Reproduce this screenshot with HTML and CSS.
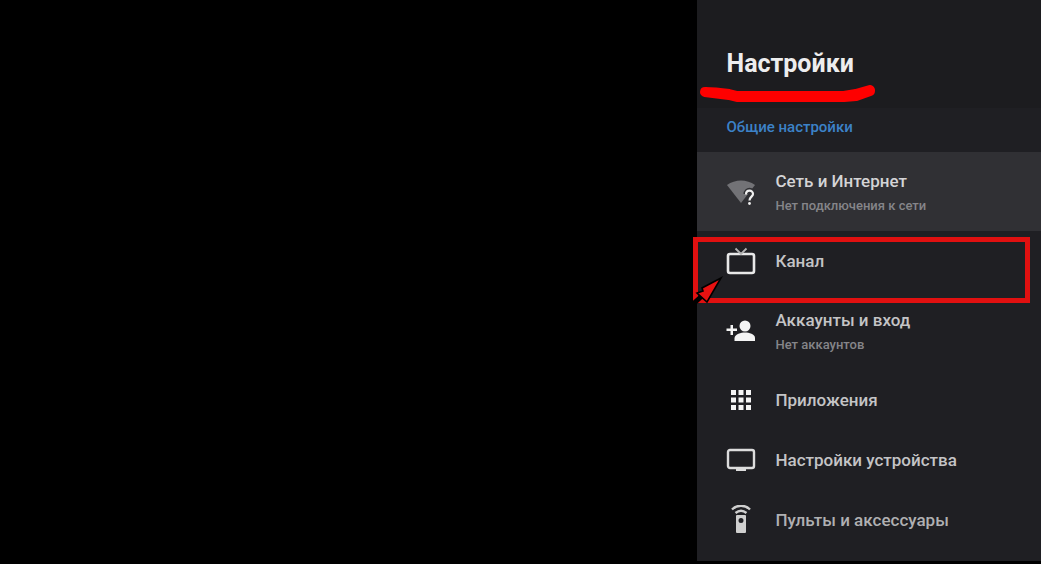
FILE: index.html
```
<!DOCTYPE html>
<html lang="ru">
<head>
<meta charset="UTF-8">
<meta name="viewport" content="width=device-width, initial-scale=1.0">
<title>Настройки</title>
<link rel="stylesheet" href="styles.css">
</head>
<body>

<div class="screen">
    <aside class="panel">
        <header class="header">
            <h1 class="title">Настройки
                <svg class="underline" viewBox="0 0 176 20" aria-hidden="true">
                    <path d="M5 7 C14 7 22 8 29 9 L37 11 L144 11 L156 9 L170 5 L170 6 L156 11 L144 12 L37 12 L29 10 Z"/>
                </svg>
            </h1>
        </header>
        <h2 class="section">Общие настройки</h2>
        <nav class="menu">
            <button class="item tall active" type="button">
                <svg class="icon" viewBox="0 0 30 30" aria-hidden="true">
                    <path fill="#727276" d="M1 8 C9 2 21 2 29 8 L15 26 Z"/>
                    <path fill="none" stroke="#303034" stroke-width="5" d="M20 17 C20 12 27 12 27 17 C27 19 23.500 19.500 23.500 27"/>
                    <path fill="none" stroke="#f0f0f0" stroke-width="2.200" d="M20 17.500 C20 12.500 27 12.500 27 17 C27 19.500 23.500 20 23.500 23.500"/>
                    <circle cx="23.500" cy="26.500" r="1.400" fill="#f0f0f0"/>
                </svg>
                <span class="text">
                    <span class="name">Сеть и Интернет</span>
                    <span class="note">Нет подключения к сети</span>
                </span>
            </button>
            <button class="item" type="button">
                <svg class="icon" viewBox="0 0 30 30" aria-hidden="true">
                    <rect x="2" y="8" width="26" height="19" rx="2" fill="none" stroke="#e8e8e8" stroke-width="2.600"/>
                    <path fill="none" stroke="#b4b4b4" stroke-width="1.800" d="M9.500 2.500 L15 8 L20.500 2.500"/>
                </svg>
                <span class="text">
                    <span class="name">Канал</span>
                </span>
                <span class="frame">
                    <svg class="arrow" viewBox="0 0 32 30" aria-hidden="true">
                        <path fill="none" stroke="#000" stroke-width="5" d="M0 30 L10 21"/>
                        <path fill="#e81111" stroke="#000" stroke-width="1.600" d="M28 4 L9 14 L10 17 L4 19 L14 28 Z"/>
                    </svg>
                </span>
            </button>
            <button class="item tall" type="button">
                <svg class="icon" viewBox="0 0 30 30" aria-hidden="true">
                    <circle cx="19" cy="10" r="5.500"/>
                    <path d="M8.500 25 V22 C9 18 15 16.500 19 16.500 C23 16.500 29 18 29 22 V25 Z"/>
                    <path d="M4.500 9 H7 V12.500 H11 V15 H7 V19 H4.500 V15 H0.500 V12.500 H4.500 Z"/>
                </svg>
                <span class="text">
                    <span class="name">Аккаунты и вход</span>
                    <span class="note">Нет аккаунтов</span>
                </span>
            </button>
            <button class="item" type="button">
                <svg class="icon" viewBox="0 0 30 30" aria-hidden="true">
                    <path d="M5 5h5v5H5z M12.500 5h5v5h-5z M20 5h5v5h-5z M5 12.500h5v5H5z M12.500 12.500h5v5h-5z M20 12.500h5v5h-5z M5 20h5v5H5z M12.500 20h5v5h-5z M20 20h5v5h-5z"/>
                </svg>
                <span class="text">
                    <span class="name">Приложения</span>
                </span>
            </button>
            <button class="item" type="button">
                <svg class="icon" viewBox="0 0 30 30" aria-hidden="true">
                    <rect x="2" y="5" width="26" height="18" rx="2" fill="none" stroke="#dcdcdc" stroke-width="2.400"/>
                    <path fill="#dcdcdc" d="M10 23 H20 V26 H10 Z"/>
                </svg>
                <span class="text">
                    <span class="name">Настройки устройства</span>
                </span>
            </button>
            <button class="item last" type="button">
                <svg class="icon" viewBox="0 0 30 30" aria-hidden="true">
                    <path fill="none" stroke="#cfcfcf" stroke-width="2.400" d="M6 4.500 C11 -0.500 19 -0.500 24 4.500 M9.500 8 C13 5 17 5 20.500 8"/>
                    <path fill="#cfcfcf" fill-rule="evenodd" d="M11 10 H19 Q20 10 20 11 V27 Q20 28 19 28 H11 Q10 28 10 27 V11 Q10 10 11 10 Z M15 13 A2.500 2.500 0 1 0 15 18 A2.500 2.500 0 1 0 15 13 Z"/>
                </svg>
                <span class="text">
                    <span class="name">Пульты и аксессуары</span>
                </span>
            </button>
        </nav>
    </aside>
</div>

</body>
</html>
```
FILE: styles.css
```
* {
    box-sizing: border-box;
}

body {
    margin: 0;
    background-color: #000;
    font-family: Roboto, "Noto Sans", sans-serif;
}

.screen {
    display: flex;
    justify-content: flex-end;
    min-height: 100vh;
    padding-bottom: 3px;
}

/* Боковая панель */
.panel {
    width: 33%;
    min-width: 320px;
    background-color: #1f1f23;
}

.header {
    padding: 48px 29px 28px;
    background-color: #1c1c1f;
}

.title {
    position: relative;
    margin: 0;
    font-size: 25px;
    line-height: 32px;
    font-weight: 700;
    color: #ededee;
}

.underline {
    position: absolute;
    left: -26px;
    top: 37px;
    width: 176px;
    height: 20px;
    fill: #fe0000;
    stroke: #fe0000;
    stroke-width: 10px;
    stroke-linejoin: round;
}

.section {
    margin: 0;
    padding: 9px 29px 15px;
    font-size: 15px;
    line-height: 20px;
    font-weight: 500;
    color: #3c82c8;
}

/* Пункты меню */
.menu {
    display: flex;
    flex-direction: column;
}

.item {
    position: relative;
    display: flex;
    align-items: center;
    gap: 19px;
    height: 60px;
    padding: 0 29px;
    border: none;
    background: none;
    font-family: inherit;
    color: #c4c4c6;
    text-align: left;
    cursor: pointer;
}

.tall {
    height: 79px;
}

.active {
    background-color: #303034;
    color: #d4d4d6;
}

.last {
    color: #b0b0b2;
}

.icon {
    flex: none;
    width: 30px;
    height: 30px;
    fill: #f4f4f4;
}

.text {
    display: flex;
    flex-direction: column;
    gap: 3px;
}

.tall .text {
    padding-top: 2px;
}

.name {
    font-size: 17px;
    line-height: 24px;
    font-weight: 500;
}

.note {
    font-size: 13px;
    line-height: 20px;
    font-weight: 500;
    color: #858589;
}

/* Красная рамка со стрелкой */
.frame {
    position: absolute;
    z-index: 1;
    top: 6px;
    right: 11px;
    bottom: -12px;
    left: -4px;
    border: 5px solid #e01010;
}

.arrow {
    position: absolute;
    left: -5px;
    bottom: -6px;
    width: 32px;
    height: 30px;
}
```
